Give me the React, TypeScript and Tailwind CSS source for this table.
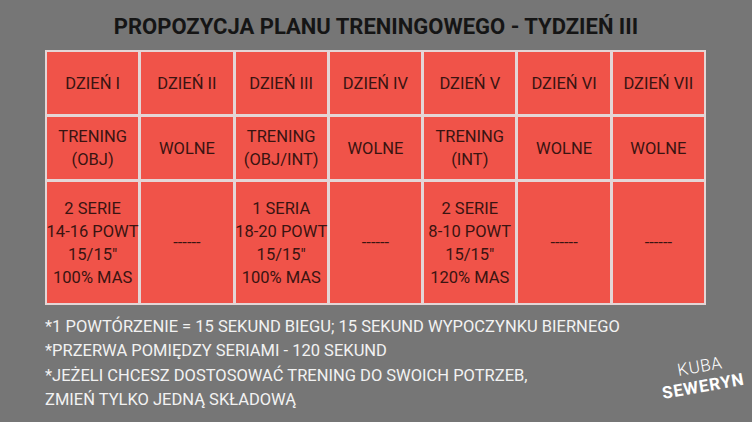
const days = ['DZIEŃ I', 'DZIEŃ II', 'DZIEŃ III', 'DZIEŃ IV', 'DZIEŃ V', 'DZIEŃ VI', 'DZIEŃ VII'];

const types: string[][] = [
  ['TRENING', '(OBJ)'],
  ['WOLNE'],
  ['TRENING', '(OBJ/INT)'],
  ['WOLNE'],
  ['TRENING', '(INT)'],
  ['WOLNE'],
  ['WOLNE'],
];

const plans: string[][] = [
  ['2 SERIE', '14-16 POWT', '15/15"', '100% MAS'],
  ['------'],
  ['1 SERIA', '18-20 POWT', '15/15"', '100% MAS'],
  ['------'],
  ['2 SERIE', '8-10 POWT', '15/15"', '120% MAS'],
  ['------'],
  ['------'],
];

function Cell({ lines }: { lines: string[] }) {
  return (
    <div className="bg-[#f05349] flex flex-col items-center justify-center text-center text-[16.5px] leading-[23px] text-[#3a1411] whitespace-nowrap">
      {lines.map((l, i) => (
        <span key={i}>{l}</span>
      ))}
    </div>
  );
}

export default function App() {
  return (
    <div
      className="relative w-[752px] h-[422px] bg-[#767676] overflow-hidden"
      style={{ fontFamily: 'Roboto, "Noto Sans", sans-serif' }}
    >
      <h1 className="pt-[13px] text-center text-[22px] leading-[28px] font-bold text-[#151515]">
        PROPOZYCJA PLANU TRENINGOWEGO - TYDZIEŃ III
      </h1>

      <div className="ml-[45px] mt-[9px] w-[661px] grid grid-cols-7 grid-rows-[62px_62px_121px] gap-[3px] p-[2px] bg-[#e4d6d6]">
        {days.map((d) => (
          <Cell key={d} lines={[d]} />
        ))}
        {types.map((t, i) => (
          <Cell key={i} lines={t} />
        ))}
        {plans.map((p, i) => (
          <Cell key={i} lines={p} />
        ))}
      </div>

      <div className="ml-[45px] mt-[10px] text-[16.5px] leading-[24.3px] text-[#f2f2f2]">
        <p>*1 POWTÓRZENIE = 15 SEKUND BIEGU; 15 SEKUND WYPOCZYNKU BIERNEGO</p>
        <p>*PRZERWA POMIĘDZY SERIAMI - 120 SEKUND</p>
        <p>*JEŻELI CHCESZ DOSTOSOWAĆ TRENING DO SWOICH POTRZEB,</p>
        <p>ZMIEŃ TYLKO JEDNĄ SKŁADOWĄ</p>
      </div>

      <div className="absolute left-[660px] top-[358px] -rotate-[10deg] text-white text-center">
        <div className="text-[17px] leading-[16px] font-light tracking-[0.5px]">KUBA</div>
        <div className="mt-[4px] text-[17px] leading-[17px] font-bold tracking-[0.8px]">SEWERYN</div>
      </div>
    </div>
  );
}
